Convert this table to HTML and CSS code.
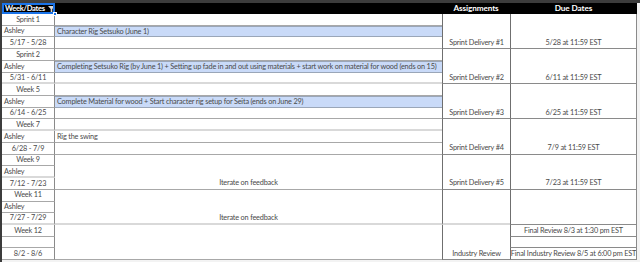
FILE: index.html
```
<!DOCTYPE html>
<html>
<head>
<meta charset="utf-8">
<link rel="stylesheet" href="styles.css">
</head>
<body>
<div class="frame">
  <div class="sheet">
    <div class="hd a sel"><span class="hlabel">Week/Dates</span>
      <svg class="funnel" width="7" height="6" viewBox="0 0 7 6"><path d="M0 0H7L4.3 3V6H2.7V3Z" fill="#d8d8d8"/></svg>
      <span class="handle"></span>
    </div>
    <div class="hd b"></div>
    <div class="hd c">Assignments</div>
    <div class="hd d">Due Dates</div>

    <!-- group 1 -->
    <div class="a ctr">Sprint 1</div><div class="b"></div><div class="c g">Sprint Delivery #1</div><div class="d g">5/28 at 11:59 EST</div>
    <div class="a">Ashley</div><div class="b blue">Character Rig Setsuko (June 1)</div>
    <div class="a ctr">5/17 - 5/28</div><div class="b"></div>

    <!-- group 2 -->
    <div class="a ctr">Sprint 2</div><div class="b"></div><div class="c g">Sprint Delivery #2</div><div class="d g">6/11 at 11:59 EST</div>
    <div class="a">Ashley</div><div class="b blue">Completing Setsuko Rig (by June 1) + Setting up fade in and out using materials + start work on material for wood (ends on 15)</div>
    <div class="a ctr light">5/31 - 6/11</div><div class="b light"></div>

    <!-- group 3 -->
    <div class="a ctr">Week 5</div><div class="b"></div><div class="c g">Sprint Delivery #3</div><div class="d g">6/25 at 11:59 EST</div>
    <div class="a">Ashley</div><div class="b blue">Complete Material for wood + Start character rig setup for Seita (ends on June 29)</div>
    <div class="a ctr">6/14 - 6/25</div><div class="b"></div>

    <!-- group 4 -->
    <div class="a ctr light">Week 7</div><div class="b light"></div><div class="c g">Sprint Delivery #4</div><div class="d g">7/9 at 11:59 EST</div>
    <div class="a">Ashley</div><div class="b">Rig the swing</div>
    <div class="a ctr">6/28 - 7/9</div><div class="b"></div>

    <!-- group 5 -->
    <div class="a ctr">Week 9</div><div class="b g ctr">Iterate on feedback</div><div class="c g">Sprint Delivery #5</div><div class="d g">7/23 at 11:59 EST</div>
    <div class="a light">Ashley</div>
    <div class="a ctr">7/12 - 7/23</div>

    <!-- group 6 -->
    <div class="a ctr">Week 11</div><div class="b g ctr light">Iterate on feedback</div><div class="c g light"></div><div class="d g"></div>
    <div class="a">Ashley</div>
    <div class="a ctr light">7/27 - 7/29</div>

    <!-- group 7 -->
    <div class="a ctr">Week 12</div><div class="b g"></div><div class="c g">Industry Review</div><div class="d ctr">Final Review 8/3 at 1:30 pm EST</div>
    <div class="a"></div><div class="d"></div>
    <div class="a ctr">8/2 - 8/6</div><div class="d ctr tight">Final Industry Review 8/5 at 6:00 pm EST</div>
  </div>
</div>
</body>
</html>
```
FILE: styles.css
```
html, body {
  margin: 0;
  padding: 0;
  background: #ffffff;
}

.frame {
  width: 640px;
  height: 262px;
  overflow: hidden;
  border-top: 3px solid #3c3c3c;
  border-left: 2px solid #3c3c3c;
  box-sizing: border-box;
  background: #f3f3f3;
}

.sheet {
  display: grid;
  grid-template-columns: 53px 387px 68px 127px;
  grid-template-rows: 11px;
  grid-auto-rows: 11.72px;
  font-family: Lato, "Liberation Sans", Arial, sans-serif;
  font-size: 7.3px;
  letter-spacing: -0.18px;
  color: #4a4a4a;
  background: #ffffff;
  width: 635px;
}

.sheet > div {
  box-sizing: border-box;
  white-space: nowrap;
  overflow: hidden;
  display: flex;
  align-items: center;
  padding: 0 2px;
  line-height: 1;
}

.a {
  grid-column: 1;
  border-right: 1px solid #8a8a8a;
  border-bottom: 1px solid #a8a8a8;
}

.b {
  grid-column: 2;
  border-bottom: 1px solid #a8a8a8;
}

.c {
  grid-column: 3;
  border-left: 1px solid #6f6f6f;
  border-bottom: 1px solid #8a8a8a;
  justify-content: center;
}

.d {
  grid-column: 4;
  border-left: 1px solid #6f6f6f;
  border-right: 1px solid #8a8a8a;
  border-bottom: 1px solid #8a8a8a;
  justify-content: center;
}

.ctr {
  justify-content: center;
}

.tight {
  padding: 0 !important;
}

.g {
  grid-row: span 3;
  align-items: flex-end !important;
  padding-bottom: 2px !important;
}

.light {
  border-bottom: 2px solid #d9d9d9 !important;
}

.blue {
  background: #c9daf8;
  border-top: 1px solid #9aa6b8;
  border-bottom: 1px solid #9aa6b8 !important;
}

.hd {
  background: #000000;
  color: #ffffff;
  font-weight: bold;
  font-size: 8.2px;
  letter-spacing: -0.1px;
  border: none !important;
  justify-content: center;
}

.hd.a {
  justify-content: flex-start;
  position: relative;
  padding-left: 3px;
  overflow: visible !important;
  font-size: 7.6px;
  letter-spacing: -0.3px;
}

.hlabel {
  flex: none;
}

.sel {
  outline: 2px solid #1a73e8;
  outline-offset: -2px;
}

.funnel {
  flex: none;
  margin-left: 3px;
}

.handle {
  position: absolute;
  right: -2px;
  bottom: -2px;
  width: 4px;
  height: 4px;
  background: #1a73e8;
  border: 1px solid #ffffff;
  box-sizing: border-box;
  z-index: 2;
}
```
